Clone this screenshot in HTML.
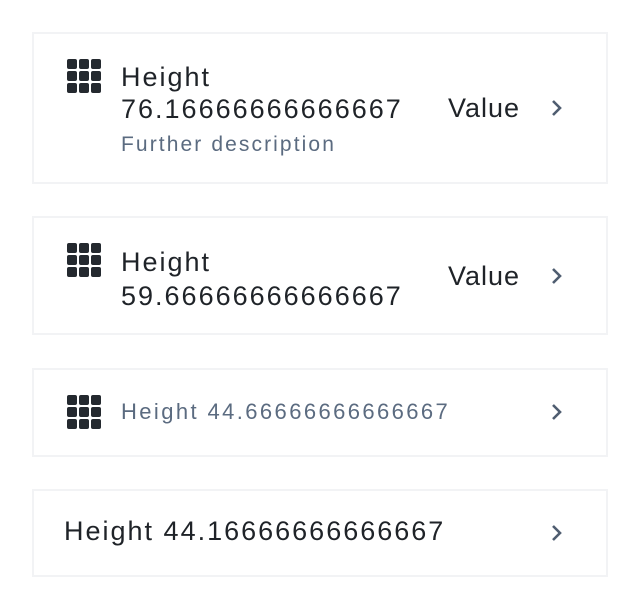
<!DOCTYPE html>
<html><head><style>
*{margin:0;padding:0;box-sizing:border-box}
body{width:640px;height:610px;background:#fff;font-family:"Liberation Sans",sans-serif;position:relative;overflow:hidden}
.card{position:absolute;left:32px;width:576px;border:2px solid #f2f3f5;background:#fff}
.t{position:absolute;white-space:nowrap;color:#1f2328}
.big{font-size:27px;letter-spacing:2px}
.g{display:grid;grid-template-columns:repeat(3,10px);gap:2px;position:absolute}
.g i{width:10px;height:10px;background:#24292f;border-radius:2px;display:block}
svg{position:absolute}
</style></head><body>
<div class="card" style="top:32px;height:152px"></div>
<div class="card" style="top:216px;height:119px"></div>
<div class="card" style="top:368px;height:89px"></div>
<div class="card" style="top:489px;height:88px"></div>

<div class="g" style="left:67px;top:59px"><i></i><i></i><i></i><i></i><i></i><i></i><i></i><i></i><i></i></div>
<div class="t big" style="left:121px;top:61px;line-height:32px">Height<br>76.16666666666667</div>
<div class="t" style="left:121px;top:133px;font-size:21px;letter-spacing:2.1px;color:#5b6b80">Further description</div>
<div class="t" style="left:448px;top:93px;font-size:27px;letter-spacing:1px">Value</div>
<svg style="left:548px;top:98px" width="16" height="20" viewBox="0 0 16 20"><path d="M5 3l7 7-7 7" fill="none" stroke="#4f5d70" stroke-width="2.6"/></svg>

<div class="g" style="left:67px;top:243px"><i></i><i></i><i></i><i></i><i></i><i></i><i></i><i></i><i></i></div>
<div class="t big" style="left:121px;top:245px;line-height:34px">Height<br>59.66666666666667</div>
<div class="t" style="left:448px;top:261px;font-size:27px;letter-spacing:1px">Value</div>
<svg style="left:548px;top:266px" width="16" height="20" viewBox="0 0 16 20"><path d="M5 3l7 7-7 7" fill="none" stroke="#4f5d70" stroke-width="2.6"/></svg>

<div class="g" style="left:67px;top:395px"><i></i><i></i><i></i><i></i><i></i><i></i><i></i><i></i><i></i></div>
<div class="t" style="left:121px;top:399px;font-size:22px;letter-spacing:2.4px;color:#5b6b80">Height 44.66666666666667</div>
<svg style="left:548px;top:402px" width="16" height="20" viewBox="0 0 16 20"><path d="M5 3l7 7-7 7" fill="none" stroke="#4f5d70" stroke-width="2.6"/></svg>

<div class="t big" style="left:64px;top:516px">Height 44.16666666666667</div>
<svg style="left:548px;top:523px" width="16" height="20" viewBox="0 0 16 20"><path d="M5 3l7 7-7 7" fill="none" stroke="#4f5d70" stroke-width="2.6"/></svg>
</body></html>
